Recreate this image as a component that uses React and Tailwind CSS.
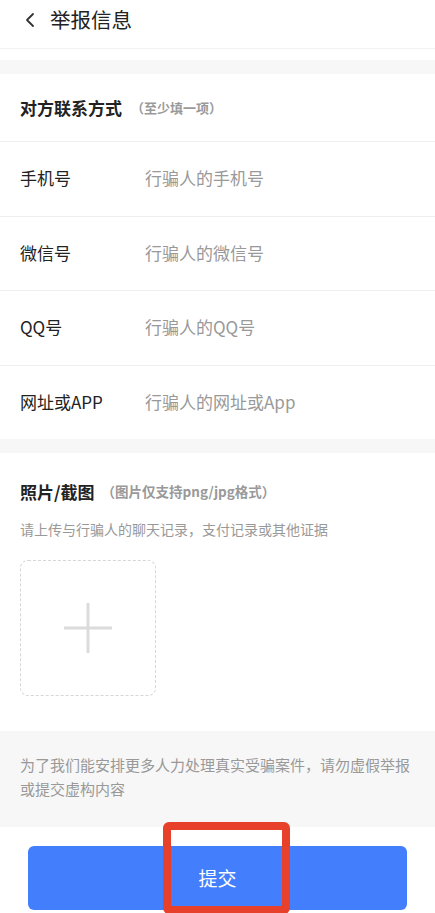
const rows = [
  { label: "手机号", placeholder: "行骗人的手机号" },
  { label: "微信号", placeholder: "行骗人的微信号" },
  { label: "QQ号", placeholder: "行骗人的QQ号" },
  { label: "网址或APP", placeholder: "行骗人的网址或App" },
];

export default function App() {
  return (
    <div
      className="relative w-[435px] h-[913px] overflow-hidden bg-white text-[#222]"
      style={{ fontFamily: '"Noto Sans CJK SC", "Noto Sans", sans-serif' }}
    >
      {/* header */}
      <div className="h-[49px] flex items-center pl-[23px] border-b border-[#f2f2f2]">
        <svg width="14" height="18" viewBox="0 0 14 18" className="mt-[-8px]">
          <path d="M10 3 L4 9 L10 15" fill="none" stroke="#333" strokeWidth="1.8" strokeLinecap="round" strokeLinejoin="round" />
        </svg>
        <span className="ml-[13px] text-[20.5px] leading-none mt-[-9px] text-[#222]">举报信息</span>
      </div>
      <div className="h-[11px]" />
      <div className="h-[14px] bg-[#f7f7f7]" />

      {/* contact section */}
      <div className="h-[67px] flex items-center px-[20px]">
        <span className="text-[17px] font-bold leading-none">对方联系方式</span>
        <span className="ml-[9px] text-[13px] font-bold text-[#999] leading-none">（至少填一项）</span>
      </div>
      <div>
        {rows.map((r) => (
          <div key={r.label} className="h-[74.5px] flex items-center pb-[2px] border-t border-[#eee] px-[20px]">
            <span className="w-[125px] text-[17px] text-[#222]">{r.label}</span>
            <span className="text-[17px] text-[#999]">{r.placeholder}</span>
          </div>
        ))}
      </div>

      <div className="h-[14px] bg-[#f7f7f7]" />

      {/* photo section */}
      <div className="px-[20px] pt-[30px]">
        <div className="flex items-center">
          <span className="text-[17px] font-bold leading-none">照片/截图</span>
          <span className="ml-[7px] text-[13.5px] font-bold text-[#999] leading-none">（图片仅支持png/jpg格式）</span>
        </div>
        <div className="mt-[22px] text-[14px] text-[#999] leading-none">请上传与行骗人的聊天记录，支付记录或其他证据</div>
        <div className="mt-[24px] w-[136px] h-[136px] rounded-[8px] border border-dashed border-[#d6d6d6] flex items-center justify-center">
          <svg width="50" height="50" viewBox="0 0 50 50">
            <path d="M25 0 V50 M1 25 H49" stroke="#dcdcdc" strokeWidth="3" />
          </svg>
        </div>
      </div>
      <div className="h-[35px]" />

      {/* notice */}
      <div className="bg-[#f7f7f7] h-[96px] px-[20px] pt-[22px] text-[15px] leading-[24px] text-[#999]">
        为了我们能安排更多人力处理真实受骗案件，请勿虚假举报或提交虚构内容
      </div>

      {/* submit */}
      <div className="px-[28px] pt-[19px]">
        <button className="w-full h-[64px] rounded-[6px] bg-[#437efc] text-white text-[19px]">提交</button>
      </div>

      {/* annotation */}
      <div className="absolute left-[163px] top-[822px] w-[127px] h-[92px] border-[8px] border-[#e8412b] rounded-[6px]" />
    </div>
  );
}
